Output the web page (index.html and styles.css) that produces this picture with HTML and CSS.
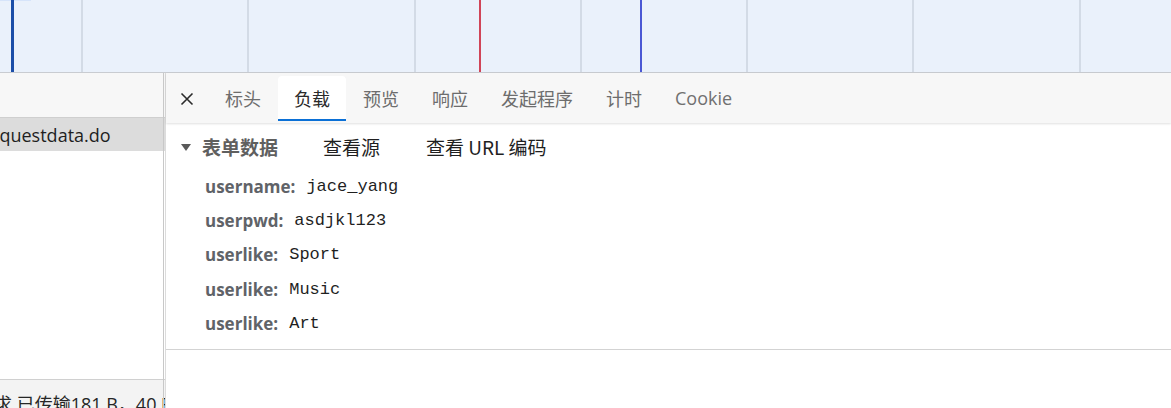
FILE: index.html
```html
<!DOCTYPE html>
<html lang="zh-CN">
<head>
<meta charset="utf-8">
<title>Network payload</title>
<link rel="stylesheet" href="styles.css">
</head>
<body>
<div class="overview">
  <div class="grid">
    <div class="col first"></div>
    <div class="col"></div>
    <div class="col"></div>
    <div class="col"></div>
    <div class="col"></div>
    <div class="col"></div>
    <div class="col"></div>
    <div class="col last"></div>
  </div>
  <div class="patch"></div>
  <div class="marker m-blue-thick"></div>
  <div class="marker m-red"></div>
  <div class="marker m-blue"></div>
</div>
<div class="main">
  <aside class="left">
    <div class="left-head"></div>
    <div class="req-row selected"><span class="req-name">requestdata.do</span></div>
    <div class="left-fill"></div>
    <div class="status"><span class="status-text">求 已传输181 B，40 B</span></div>
  </aside>
  <section class="right">
    <div class="tabbar">
      <button class="close" aria-label="关闭">
        <svg width="14" height="14" viewBox="0 0 14 14"><path d="M1.5 1.5 L12.5 12.5 M12.5 1.5 L1.5 12.5" stroke="#2b2b2b" stroke-width="1.6" fill="none"/></svg>
      </button>
      <div class="tab">标头</div>
      <div class="tab active">负载</div>
      <div class="tab">预览</div>
      <div class="tab">响应</div>
      <div class="tab">发起程序</div>
      <div class="tab">计时</div>
      <div class="tab latin">Cookie</div>
    </div>
    <div class="payload">
      <div class="section-head">
        <span class="tri"></span>
        <span class="section-title">表单数据</span>
        <span class="link">查看源</span>
        <span class="link">查看 URL 编码</span>
      </div>
      <div class="kv"><span class="k">username:</span><span class="v">jace_yang</span></div>
      <div class="kv"><span class="k">userpwd:</span><span class="v">asdjkl123</span></div>
      <div class="kv"><span class="k">userlike:</span><span class="v">Sport</span></div>
      <div class="kv"><span class="k">userlike:</span><span class="v">Music</span></div>
      <div class="kv"><span class="k">userlike:</span><span class="v">Art</span></div>
    </div>
  </section>
</div>
</body>
</html>
```

FILE: styles.css
```css
* { box-sizing: border-box; }
html, body { margin: 0; padding: 0; }
body {
  width: 1171px;
  height: 408px;
  overflow: hidden;
  background: #ffffff;
  font-family: "Open Sans", "Noto Sans CJK SC", sans-serif;
  color: #1f1f1f;
}

/* overview strip */
.overview {
  position: relative;
  height: 73px;
  background: #eaf1fb;
  border-bottom: 1px solid #c9ccd1;
  overflow: hidden;
}
.grid {
  display: flex;
  height: 100%;
}
.col {
  width: 166.3px;
  flex: none;
  border-right: 2px solid #d3dbe6;
}
.col.first { width: 83px; }
.col.last { border-right: none; flex: 1; }
.patch {
  position: absolute;
  left: 0; top: 0;
  width: 31px; height: 1px;
  background: #d6e4fa;
}
.marker { position: absolute; top: 0; bottom: 0; }
.m-blue-thick { left: 11px; width: 3px; background: #1b4ea8; }
.m-red { left: 479px; width: 2px; background: #d04457; }
.m-blue { left: 640px; width: 2px; background: #4a58d4; }

/* main */
.main {
  display: flex;
  height: 335px;
}
.left {
  width: 166px;
  flex: none;
  display: flex;
  flex-direction: column;
  border-right: 1px solid #dcdcdc;
  position: relative;
}
.left::after {
  content: "";
  position: absolute;
  top: 0; bottom: 0; right: 1px;
  width: 1px;
  background: #c8c8c8;
}
.left-head {
  height: 45px;
  background: #f7f7f7;
  border-bottom: 1px solid #cfcfcf;
}
.req-row {
  height: 33px;
  display: flex;
  align-items: center;
  overflow: hidden;
  white-space: nowrap;
  font-size: 18px;
  color: #1f1f1f;
}
.req-row.selected { background: #dcdcdc; }
.req-name { margin-left: -18px; }
.left-fill { flex: 1; }
.status {
  height: 29px;
  background: #f3f3f3;
  border-top: 1px solid #d0d0d0;
  overflow: hidden;
  white-space: nowrap;
  font-size: 18px;
  color: #262626;
}
.status-text {
  display: block;
  margin-left: -6px;
  padding-top: 11px;
  line-height: 26px;
}

.right {
  flex: 1;
  display: flex;
  flex-direction: column;
}
.tabbar {
  height: 50px;
  background: #f7f7f7;
  display: flex;
  align-items: flex-start;
  gap: 1px;
  padding-left: 7px;
  padding-top: 3px;
  box-shadow: 0 1px 2px rgba(0,0,0,0.12);
  position: relative;
}
.close {
  width: 28px;
  height: 45px;
  margin-right: 7px;
  border: none;
  background: transparent;
  padding: 0;
  display: flex;
  align-items: center;
  justify-content: center;
}
.tab {
  height: 45px;
  padding: 0 16px 1px 16px;
  display: flex;
  align-items: center;
  font-size: 18px;
  color: #6d6d6d;
  font-family: "Noto Sans CJK SC", sans-serif;
  border-radius: 4px 4px 0 0;
}
.tab.latin { font-family: "Open Sans", sans-serif; font-size: 18px; color: #707070; }
.tab.active {
  background: #ffffff;
  color: #2a2a2a;
  box-shadow: inset 0 -2px 0 #0b70d6;
}

.payload {
  border-bottom: 1px solid #d3d3d3;
  padding-bottom: 8px;
  padding-top: 11px;
}
.section-head {
  display: flex;
  align-items: center;
  height: 24px;
  padding-left: 15px;
  font-size: 19px;
  font-family: "Noto Sans CJK SC", sans-serif;
  margin-bottom: 11px;
}
.tri {
  width: 0; height: 0;
  border-left: 5px solid transparent;
  border-right: 5px solid transparent;
  border-top: 7px solid #5a5a5a;
  margin-right: 11px;
  margin-top: 2px;
}
.section-title {
  font-weight: 700;
  color: #5f5f5f;
  margin-right: 45px;
}
.link {
  color: #1f1f1f;
  margin-right: 46px;
}
.kv {
  height: 34.4px;
  display: flex;
  align-items: center;
  padding-left: 39px;
  white-space: nowrap;
}
.k {
  font-family: "Open Sans", sans-serif;
  font-weight: 700;
  font-size: 17px;
  color: #5f6368;
  margin-right: 11px;
}
.v {
  font-family: "Liberation Mono", monospace;
  font-size: 17px;
  color: #1f1f1f;
}
```
